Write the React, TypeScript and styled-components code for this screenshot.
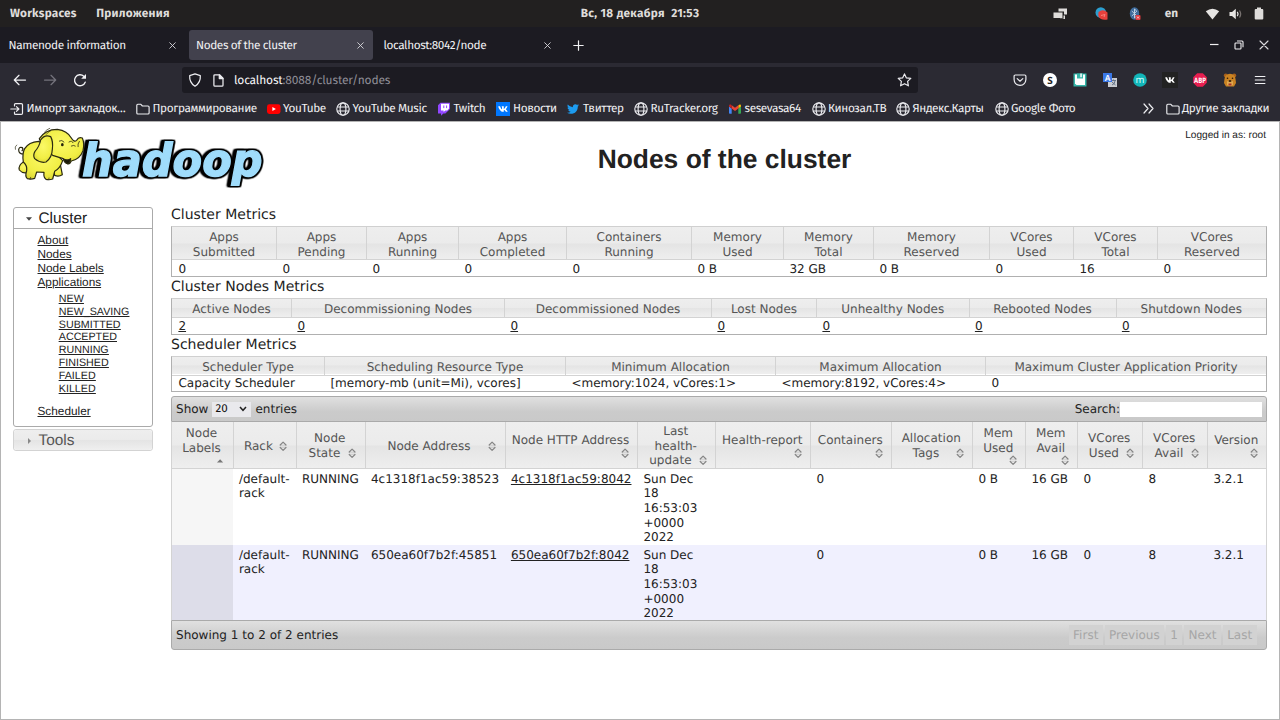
import React from 'react';
import styled, { createGlobalStyle, css } from 'styled-components';
import { FaTwitter, FaVk } from 'react-icons/fa';

const GlobalStyle = createGlobalStyle`
  * { box-sizing: border-box; }
  html, body { margin: 0; padding: 0; }
  body {
    width: 1280px;
    height: 720px;
    overflow: hidden;
    background: #fff;
    text-rendering: geometricPrecision;
  }
`;

const uiFont = `"Fira Sans", "Noto Sans", "Open Sans", sans-serif`;
const sansFont = `"Liberation Sans", Arial, sans-serif`;
const dataFont = `"DejaVu Sans", Verdana, sans-serif`;

const Window = styled.div`
  display: flex;
  flex-direction: column;
  width: 1280px;
  height: 720px;
  font-family: ${uiFont};
  font-size: 11.8px;
  color: #f0f0f2;
`;

const Label = styled.span<{ $ls?: number }>`
  white-space: nowrap;
  letter-spacing: ${(p) => p.$ls ?? -0.38}px;
`;

/* ---------- desktop panel ---------- */

const Panel = styled.div`
  display: grid;
  grid-template-columns: 1fr auto 1fr;
  align-items: center;
  height: 27px;
  padding: 0 10px 0 10px;
  background: #222020;
  color: #dedcda;
  font-weight: 700;
`;

const PanelLeft = styled.div`
  display: flex;
  gap: 19.5px;
`;

const PanelRight = styled.div`
  display: flex;
  justify-content: flex-end;
  align-items: center;

  svg { display: block; }
`;

const Spacer = styled.span<{ $w: number }>`
  flex: none;
  width: ${(p) => p.$w}px;
`;

/* ---------- tabs ---------- */

const TabStrip = styled.div`
  display: flex;
  align-items: center;
  height: 36px;
  padding: 0 11px 0 1.5px;
  background: #1c1b22;
`;

const Tab = styled.div<{ $active?: boolean }>`
  display: flex;
  align-items: center;
  justify-content: space-between;
  width: 184px;
  height: 30px;
  margin-right: 3.5px;
  padding: 1px 9.5px 0 7px;
  border-radius: 3px;
  background: ${(p) => (p.$active ? '#42414d' : 'transparent')};

  svg { display: block; }
`;

const WindowButtons = styled.div`
  display: flex;
  align-items: center;
  gap: 15px;
  margin-left: auto;
`;

/* ---------- navigation ---------- */

const NavBar = styled.div`
  display: flex;
  align-items: center;
  height: 33px;
  padding: 1px 12px 0 13px;
  background: #2b2a33;

  > svg { display: block; flex: none; }
`;

const UrlBar = styled.div`
  display: flex;
  align-items: center;
  width: 736px;
  height: 26px;
  margin: 0 0 0 95px;
  padding: 0 6px;
  border-radius: 3px;
  background: #1c1b22;
  color: #8e8d96;

  b { font-weight: 400; color: #f4f4f6; }
  svg { display: block; }
`;

const UrlText = styled(Label)`
  flex: 1;
  margin-left: 10px;
  padding-top: 1px;
  font-size: 12px;
`;

const Extensions = styled.div`
  display: flex;
  align-items: center;
  gap: 14px;
  margin-left: auto;

  svg { display: block; width: 16px; height: 16px; }
`;

const Bookmarks = styled.div`
  display: flex;
  align-items: center;
  height: 25px;
  padding: 0 0 0 10px;
  background: #2b2a33;
`;

const Bookmark = styled.div<{ $w: number }>`
  display: flex;
  flex: none;
  align-items: center;
  width: ${(p) => p.$w}px;

  > svg { display: block; flex: none; width: 14px; height: 14px; margin-right: 2.5px; }
`;

/* ---------- page ---------- */

const Page = styled.div`
  display: flex;
  flex-direction: column;
  height: 599px;
  border: 1px solid #b4b4b4;
  background: #fff;
  color: #222;
  font-family: ${dataFont};
`;

const Banner = styled.header`
  display: grid;
  grid-template-columns: 260px 1fr 160px;
  height: 83px;
`;

const LogoBox = styled.div`
  padding: 4px 0 0 12px;
  svg { display: block; overflow: visible; }
`;

const Title = styled.h1`
  margin: 22px 0 0;
  padding-left: 69px;
  font: 700 26.4px/31px ${sansFont};
  text-align: center;
`;

const LoggedIn = styled.div`
  padding: 8px 13px 0 0;
  font: 10.1px/12px ${sansFont};
  text-align: right;
`;

const Columns = styled.div`
  display: grid;
  grid-template-columns: 140px 1096px;
  column-gap: 18px;
  align-items: start;
  padding-left: 12px;
`;

const Sidebar = styled.nav`
  display: flex;
  flex-direction: column;
  gap: 2px;
  padding-top: 2px;
  font-family: ${sansFont};
`;

const Section = styled.div`
  border: 1px solid #aaa;
  border-radius: 3px;
`;

const glass = css`
  background: linear-gradient(#eeeeee, #ebebeb 49%, #e4e4e4 51%, #efefef);
`;

const SectionHead = styled.div<{ $closed?: boolean }>`
  display: flex;
  align-items: center;
  height: ${(p) => (p.$closed ? 20 : 21)}px;
  padding: 1px 0 0 11.5px;
  font-size: 15.4px;
  border-bottom: ${(p) => (p.$closed ? '0' : '1px solid #aaa')};
  border-radius: ${(p) => (p.$closed ? '3px' : '0')};
  color: ${(p) => (p.$closed ? '#555' : '#212121')};
  ${(p) => p.$closed && glass}

  svg { display: block; margin-right: 7px; }
`;

const ToolsSection = styled(Section)`
  border-color: #d3d3d3;
`;

const Links = styled.ul<{ $nested?: boolean }>`
  margin: 0;
  list-style: none;
  text-decoration: underline;
  padding: ${(p) => (p.$nested ? '3.5px 0 8px 21.3px' : '4px 0 8.4px 23.5px')};
  font-size: ${(p) => (p.$nested ? 10.7 : 11.8)}px;
  line-height: ${(p) => (p.$nested ? 12.85 : 14.1)}px;
`;

const Content = styled.main`
  display: flex;
  flex-direction: column;
  font-size: 12.02px;
  line-height: 14.67px;
`;

const Heading = styled.h3`
  height: 21px;
  margin: 0;
  padding-top: 1.6px;
  font-size: 14.02px;
  font-weight: 400;
  line-height: 17px;
`;

const Metrics = styled.div`
  border: 1px solid #b0b0b0;
  border-top-color: #d0d0d0;
`;

const GridRow = styled.div<{ $cols: string; $h: number }>`
  display: grid;
  grid-template-columns: ${(p) => p.$cols};
  height: ${(p) => p.$h}px;
`;

const HeadRow = styled(GridRow)`
  ${glass}
  color: #555;
`;

const HeadCell = styled.div`
  display: flex;
  flex-direction: column;
  align-items: center;
  justify-content: center;
  padding-top: 3px;
  border-bottom: 1px solid #d3d3d3;
  white-space: nowrap;

  & + & { border-left: 1px solid #d3d3d3; }
`;

const Cell = styled.div`
  align-self: center;
  padding: 2.4px 0 0 6.4px;
  white-space: nowrap;
`;

/* ---------- nodes table ---------- */

const DataTable = styled.section`
  display: flex;
  flex-direction: column;
  margin-top: 4px;
`;

const Toolbar = styled.div<{ $bottom?: boolean }>`
  display: flex;
  align-items: center;
  height: ${(p) => (p.$bottom ? 30 : 26)}px;
  padding: 0 4px 0 4px;
  border: 1px solid #aaa;
  border-radius: ${(p) => (p.$bottom ? '0 0 3px 3px' : '3px 3px 0 0')};
  background: linear-gradient(#e0e0e0, #cbcbcb 60%, #c9c9c9);
`;

const PageSize = styled.span`
  display: flex;
  align-items: center;
  justify-content: space-between;
  width: 39px;
  height: 15px;
  margin: 0 4px 0 4px;
  padding: 0 4px 0 3px;
  background: #e9e9ed;
  color: #111;
  font: 400 11.6px/15px ${uiFont};
`;

const SearchLabel = styled.span`
  margin-left: auto;
`;

const SearchInput = styled.input`
  width: 142px;
  height: 15px;
  padding: 0;
  border: 0;
  background: #fff;
`;

const Body = styled.div`
  border: 1px solid #d3d3d3;
  border-width: 0 1px;
`;

const SortCell = styled(HeadCell)`
  align-items: stretch;
  padding: 2px 6.5px 0 5px;
  text-align: center;
  svg { display: block; flex: none; }
`;

const SortLine = styled.div`
  display: flex;
  align-items: center;

  span { flex: 1; }
`;

const IconLine = styled.div`
  display: flex;
  justify-content: flex-end;
  height: 10.7px;
`;

const NodeRow = styled(GridRow)<{ $even?: boolean }>`
  background: ${(p) => (p.$even ? '#f0f0fe' : '#fff')};

  > :first-child { background: ${(p) => (p.$even ? '#dddde9' : '#f6f6f6')}; }
`;

const NodeCell = styled.div<{ $underline?: boolean }>`
  padding: 2.6px 0 0 6.4px;
  white-space: pre-line;
  text-decoration: ${(p) => (p.$underline ? 'underline' : 'none')};
`;

const Pager = styled.div`
  display: flex;
  gap: 2px;
  margin-left: auto;
  margin-right: 5.5px;
  color: #a6a6a6;
`;

const PageButton = styled.span`
  height: 20px;
  padding: 0 4.3px;
  background: #d2d2d2;
  line-height: 20px;
`;

/* ---------- icons ---------- */

const Cross = ({ size = 7, w = 1 }: { size?: number; w?: number }) => (
  <svg width={size} height={size} viewBox="0 0 8 8" stroke="#dcdce0" strokeWidth={w} strokeLinecap="round">
    <path d="M.8.8l6.4 6.4M7.2.8L.8 7.2" />
  </svg>
);

const Globe = () => (
  <svg viewBox="0 0 14 14" fill="none" stroke="#ececf0" strokeWidth="1.15">
    <circle cx="7" cy="7" r="6.2" />
    <ellipse cx="7" cy="7" rx="2.9" ry="6.2" />
    <path d="M1.2 5h11.6M1.2 9h11.6" />
  </svg>
);

const Folder = () => (
  <svg viewBox="0 0 14 14" fill="none" stroke="#ececf0" strokeWidth="1.15" strokeLinejoin="round">
    <path d="M.8 11V3.2Q.8 2.2 1.8 2.2H4.6L6.4 4H12Q13.1 4 13.1 5V11Q13.1 12 12 12H1.8Q.8 12 .8 11Z" />
  </svg>
);

const ImportIcon = () => (
  <svg viewBox="0 0 14 14" fill="none" stroke="#ececf0" strokeWidth="1.2" strokeLinecap="round" strokeLinejoin="round">
    <path d="M4.5 4V2.6Q4.5 1.6 5.5 1.6H11.3Q12.5 1.6 12.5 2.8V11.2Q12.5 12.4 11.3 12.4H5.5Q4.5 12.4 4.5 11.4V10" />
    <path d="M.8 7H8.6M6.4 4.6L8.9 7L6.4 9.4" />
  </svg>
);

const YouTube = () => (
  <svg viewBox="0 0 14 14">
    <rect x="0" y="2.3" width="13.5" height="9.6" rx="2.4" fill="#f00" />
    <path d="M5.4 5.1v4l3.5-2z" fill="#fff" />
  </svg>
);

const Twitch = () => (
  <svg viewBox="0 0 14 14">
    <path d="M3.4.8L1 3.2v8.3h3v2.3l2.4-2.3h2L13 7V.8z" fill="#9146ff" />
    <path d="M4 1.8h8v4.8L10.2 8.4H8.3L6.6 10V8.4H4z" fill="#fff" />
    <path d="M6.8 3.5v2.6M9.6 3.5v2.6" stroke="#9146ff" strokeWidth="1" />
  </svg>
);

const VkBox = styled.span<{ $bg: string; $size: number }>`
  display: flex;
  flex: none;
  align-items: center;
  justify-content: center;
  width: ${(p) => p.$size}px;
  height: ${(p) => p.$size}px;
  margin-right: ${(p) => (p.$size < 16 ? 3 : 0)}px;
  background: ${(p) => p.$bg};

  && svg { width: 10px; height: 10px; }
`;

const BirdBox = styled.span`
  display: flex;
  width: 14px;
  margin-right: 2.5px;
  svg { display: block; width: 12px; height: 12px; }
`;

const Gmail = () => (
  <svg viewBox="0 0 14 14">
    <path d="M1 4.4l2.7 2v5.4H1.8Q1 11.8 1 11z" fill="#4285f4" />
    <path d="M10.3 6.4L13 4.4V11Q13 11.8 12.2 11.8H10.3z" fill="#34a853" />
    <path d="M10.3 3.4L11.2 2.7Q13 2 13 3.9V4.6L10.3 6.6z" fill="#fbbc04" />
    <path d="M3.7 6.6V3.2L7 5.7L10.3 3.2V6.6L7 9.1z" fill="#ea4335" />
    <path d="M1 4.6V3.9Q1.1 2 2.8 2.6L3.7 3.3V6.6z" fill="#c5221f" />
  </svg>
);

const SortIcon = ({ asc }: { asc?: boolean }) =>
  asc ? (
    <svg width="10.7" height="10.7" viewBox="0 0 10.7 10.7">
      <path d="M2 7.6L5.1 4.2L8.2 7.6z" fill="#777" />
    </svg>
  ) : (
    <svg width="10.7" height="10.7" viewBox="0 0 10.7 10.7" fill="none" strokeLinejoin="round" strokeLinecap="round">
      <path d="M2.6 4.2H7.6M2.6 6.3H7.6" stroke="#c4c4c4" strokeWidth=".8" />
      <path d="M2.200 4L5.100 1.100L8 4M2.200 6.500L5.100 9.400L8 6.500" stroke="#858585" strokeWidth="1.200" />
    </svg>
  );

const LogoWord = styled.text`
  font: italic 700 136px ${dataFont};
  fill: #9fdcfb;
  stroke: #9fdcfb;
  stroke-width: 4px;
  stroke-linejoin: miter;
  filter: drop-shadow(4px 0 0 #000) drop-shadow(-4px 0 0 #000) drop-shadow(0 4px 0 #000)
    drop-shadow(0 -4px 0 #000) drop-shadow(-7px 0 0 #000);
`;

const Logo = () => (
  <svg width="252" height="64" viewBox="39 24 756 192">
    <defs>
      <radialGradient id="skin" cx=".5" cy=".4" r=".75">
        <stop offset="0" stopColor="#fbf967" />
        <stop offset=".6" stopColor="#f1ee45" />
        <stop offset="1" stopColor="#cfcb2a" />
      </radialGradient>
    </defs>
    <LogoWord x="246" y="173" textLength="542" lengthAdjust="spacingAndGlyphs">hadoop</LogoWord>
    <g fill="url(#skin)" stroke="#2b2a12" strokeWidth="3.6" strokeLinejoin="round" strokeLinecap="round">
      <path d="M71 108Q56 108 56 95Q58 85 67 89Q71 94 66 98" fill="none" />
      <path d="M70 132Q54 142 58 156Q66 166 80 164L86 140Z" />
      <path d="M160 154L164 172Q176 177 187 170L181 140L164 136Z" />
      <path d="M116 70Q86 72 74 92Q66 106 70 132Q82 142 80 158Q74 174 82 182Q94 185 104 181L110 162L132 163Q130 178 138 184Q148 187 158 183L164 160Q180 152 188 128L160 100Z" />
      <path d="M118 62Q136 34 172 34Q202 38 214 60Q222 74 230 67Q236 55 247 60Q254 76 249 98Q240 124 214 129Q210 139 202 137Q192 134 190 122Q176 118 158 112L130 92Z" />
      <path d="M152 56Q134 48 122 66Q118 86 105 100Q98 112 104 122Q120 136 138 132Q156 120 157 94Q160 70 152 56Z" />
      <path d="M191 123Q206 129 212 122Q210 138 202 137Q193 133 191 123Z" fill="#17160a" />
      <path d="M178 69Q186 64 192 72M207 72Q216 66 219 74M214 84Q222 80 226 84M238 70Q232 78 234 86" fill="none" strokeWidth="2.4" />
      <path d="M46 94Q43 86 50 81M133 43Q140 34 149 31M139 49Q144 42 152 38M90 184L92 178M146 185L147 180" fill="none" strokeWidth="2" />
      <ellipse cx="187" cy="80" rx="4" ry="5" fill="#25240c" stroke="none" />
    </g>
  </svg>
);

/* ---------- data ---------- */

type MetricsTable = {
  title: string;
  cols: string;
  headH: number;
  rowH: number;
  heads: string[];
  values: string[];
  links?: boolean;
};

const metrics: MetricsTable[] = [
  {
    title: 'Cluster Metrics',
    cols: '104px 90px 92px 108px 125px 92px 90px 116px 84px 84px 109px',
    headH: 33,
    rowH: 16,
    heads: ['Apps Submitted', 'Apps Pending', 'Apps Running', 'Apps Completed', 'Containers Running', 'Memory Used', 'Memory Total', 'Memory Reserved', 'VCores Used', 'VCores Total', 'VCores Reserved'],
    values: ['0', '0', '0', '0', '0', '0 B', '32 GB', '0 B', '0', '16', '0'],
  },
  {
    title: 'Cluster Nodes Metrics',
    cols: '119px 213px 207px 105px 152.5px 147px 150.5px',
    headH: 18,
    rowH: 17,
    heads: ['Active Nodes', 'Decommissioning Nodes', 'Decommissioned Nodes', 'Lost Nodes', 'Unhealthy Nodes', 'Rebooted Nodes', 'Shutdown Nodes'],
    values: ['2', '0', '0', '0', '0', '0', '0'],
    links: true,
  },
  {
    title: 'Scheduler Metrics',
    cols: '152px 241px 210px 210px 281px',
    headH: 17,
    rowH: 17,
    heads: ['Scheduler Type', 'Scheduling Resource Type', 'Minimum Allocation', 'Maximum Allocation', 'Maximum Cluster Application Priority'],
    values: ['Capacity Scheduler', '[memory-mb (unit=Mi), vcores]', '<memory:1024, vCores:1>', '<memory:8192, vCores:4>', '0'],
  },
];

const nodeCols = '60.5px 63px 69px 140px 132.5px 78px 95px 81px 81px 53px 52px 65px 65px 59px';

const nodeHeads: { lines: string[]; below?: boolean }[] = [
  { lines: ['Node', 'Labels'], below: true },
  { lines: ['Rack'] },
  { lines: ['Node', 'State'] },
  { lines: ['Node Address'] },
  { lines: ['Node HTTP Address'], below: true },
  { lines: ['Last', 'health-', 'update'] },
  { lines: ['Health-report'], below: true },
  { lines: ['Containers'], below: true },
  { lines: ['Allocation', 'Tags'] },
  { lines: ['Mem', 'Used'], below: true },
  { lines: ['Mem', 'Avail'], below: true },
  { lines: ['VCores', 'Used'] },
  { lines: ['VCores', 'Avail'] },
  { lines: ['Version'], below: true },
];

const updated = 'Sun Dec\n18\n16:53:03\n+0000\n2022';
const nodes = [
  ['', '/default-\nrack', 'RUNNING', '4c1318f1ac59:38523', '4c1318f1ac59:8042', updated, '', '0', '', '0 B', '16 GB', '0', '8', '3.2.1'],
  ['', '/default-\nrack', 'RUNNING', '650ea60f7b2f:45851', '650ea60f7b2f:8042', updated, '', '0', '', '0 B', '16 GB', '0', '8', '3.2.1'],
];

const appStates = ['NEW', 'NEW_SAVING', 'SUBMITTED', 'ACCEPTED', 'RUNNING', 'FINISHED', 'FAILED', 'KILLED'];

const bookmarks: { icon: React.ReactNode; text: string; w: number }[] = [
  { icon: <ImportIcon />, text: 'Импорт закладок…', w: 126 },
  { icon: <Folder />, text: 'Программирование', w: 130.5 },
  { icon: <YouTube />, text: 'YouTube', w: 69.5 },
  { icon: <Globe />, text: 'YouTube Music', w: 101 },
  { icon: <Twitch />, text: 'Twitch', w: 59 },
  { icon: <VkBox $bg="#07f" $size={14}><FaVk color="#fff" /></VkBox>, text: 'Новости', w: 70.5 },
  { icon: <BirdBox><FaTwitter color="#1d9bf0" /></BirdBox>, text: 'Твиттер', w: 67.5 },
  { icon: <Globe />, text: 'RuTracker.org', w: 94 },
  { icon: <Gmail />, text: 'sesevasa64', w: 83.5 },
  { icon: <Globe />, text: 'Кинозал.ТВ', w: 84.5 },
  { icon: <Globe />, text: 'Яндекс.Карты', w: 98.5 },
  { icon: <Globe />, text: 'Google Фото', w: 148 },
];

/* ---------- sections ---------- */

const DesktopPanel = () => (
  <Panel>
    <PanelLeft>
      <Label $ls={0.2}>Workspaces</Label>
      <Label $ls={0.25}>Приложения</Label>
    </PanelLeft>
    <Label $ls={0.32}>Вс, 18 декабря&nbsp; 21:53</Label>
    <PanelRight>
      <svg width="15" height="12" viewBox="0 0 15 12" fill="#dedcda">
        <path d="M5.5.5H14v6H11V3.5H5.5z" />
        <path d="M.5 4.5H9.5v5.5H.5z" />
        <path d="M10.5 7.5H12v3.5H7V10.8H10.5z" />
      </svg>
      <Spacer $w={27} />
      <svg width="14" height="14" viewBox="0 0 14 14">
        <circle cx="5.8" cy="5.6" r="5.3" fill="#2b9fd0" />
        <path d="M3.5 5Q8 1.5 12.5 5.5V12.5Q6 14 3.3 9z" fill="#e8403c" />
        <path d="M6 8.5L10 7.5L9 10" fill="none" stroke="#f8847c" strokeWidth="1" />
      </svg>
      <Spacer $w={19} />
      <svg width="14" height="14" viewBox="0 0 14 14">
        <ellipse cx="6.5" cy="6.5" rx="4.7" ry="6.2" fill="#3f6c9c" />
        <path d="M3.8 4L8.8 8.8L6.5 11V2L8.8 4.2L3.8 9" fill="none" stroke="#c9d8e8" strokeWidth=".9" />
        <rect x="7.5" y="8" width="5" height="5" rx="1" fill="#e0383c" />
        <path d="M9 9.5l2 2M11 9.5l-2 2" stroke="#fff" strokeWidth=".7" />
      </svg>
      <Spacer $w={23} />
      <Label $ls={0}>en</Label>
      <Spacer $w={27} />
      <svg width="15" height="12" viewBox="0 0 15 12" fill="#e6e4e2">
        <path d="M.8 3.2Q7.5-1.8 14.2 3.2L7.5 11.5z" />
      </svg>
      <Spacer $w={9} />
      <svg width="14" height="12" viewBox="0 0 14 12">
        <path d="M.5 4H3L6.8.8V11.2L3 8H.5z" fill="#e6e4e2" />
        <path d="M8.3 3.8Q9.8 6 8.3 8.2" fill="none" stroke="#e6e4e2" strokeWidth="1.3" />
        <path d="M10.5 2.5Q12.8 6 10.5 9.5" fill="none" stroke="#77716f" strokeWidth="1.3" />
      </svg>
      <Spacer $w={11} />
      <svg width="10" height="13" viewBox="0 0 10 13" fill="#dedcda">
        <path d="M3 .5H7V2H8.2Q9.3 2 9.3 3V11.5Q9.3 12.5 8.2 12.5H1.8Q.7 12.5.7 11.5V3Q.7 2 1.8 2H3z" />
      </svg>
      <Spacer $w={6} />
    </PanelRight>
  </Panel>
);

const BrowserTabs = () => (
  <TabStrip>
    <Tab><Label>Namenode information</Label><Cross /></Tab>
    <Tab $active><Label>Nodes of the cluster</Label><Cross /></Tab>
    <Tab><Label>localhost:8042/node</Label><Cross /></Tab>
    <Spacer $w={9} />
    <svg width="11" height="11" viewBox="0 0 11 11" stroke="#f0f0f2" strokeWidth="1.2" strokeLinecap="round">
      <path d="M5.5.8V10.2M.8 5.5H10.2" />
    </svg>
    <WindowButtons>
      <svg width="10" height="10" viewBox="0 0 10 10" stroke="#f0f0f2" strokeWidth="1.2"><path d="M1 4.5H9.5" /></svg>
      <svg width="10" height="10" viewBox="0 0 10 10" fill="none" stroke="#f0f0f2" strokeWidth="1.1">
        <rect x="1" y="3" width="6" height="6" rx=".8" />
        <path d="M3 1H8Q9 1 9 2V7.2" />
      </svg>
      <Cross size={10} w={0.9} />
    </WindowButtons>
  </TabStrip>
);

const BrowserNav = () => (
  <NavBar>
    <svg width="14" height="12" viewBox="0 0 14 12" fill="none" stroke="#f2f2f5" strokeWidth="1.25" strokeLinecap="round" strokeLinejoin="round">
      <path d="M12.5 6H1.5M6 1.3L1.3 6L6 10.7" />
    </svg>
    <Spacer $w={16} />
    <svg width="14" height="12" viewBox="0 0 14 12" fill="none" stroke="#74737c" strokeWidth="1.25" strokeLinecap="round" strokeLinejoin="round">
      <path d="M1.5 6H12.5M8 1.3L12.7 6L8 10.7" />
    </svg>
    <Spacer $w={16} />
    <svg width="14" height="14" viewBox="0 0 14 14" fill="none" stroke="#f2f2f5" strokeWidth="1.35" strokeLinecap="round">
      <path d="M12.2 9.2A5.5 5.5 0 1 1 10.8 3.2" />
      <path d="M13 1V5.8H8.2z" fill="#f2f2f5" stroke="none" />
    </svg>
    <UrlBar>
      <svg width="14" height="14" viewBox="0 0 14 14" fill="none" stroke="#ececf0" strokeWidth="1.25" strokeLinejoin="round">
        <path d="M7 .9L12.3 2.7Q12.8 9.5 7 13.2Q1.2 9.5 1.7 2.7z" />
      </svg>
      <Spacer $w={11} />
      <svg width="11" height="13" viewBox="0 0 11 13" fill="none" stroke="#ececf0" strokeWidth="1.25" strokeLinejoin="round">
        <path d="M.9 1.8Q.9.8 1.9.8H6.5L10 4.3V11.2Q10 12.2 9 12.2H1.9Q.9 12.2.9 11.2z" />
        <path d="M6.3 1V4.6H10z" fill="#ececf0" />
      </svg>
      <UrlText $ls={-0.16}><b>localhost</b>:8088/cluster/nodes</UrlText>
      <svg width="15" height="14" viewBox="0 0 15 14" fill="none" stroke="#ececf0" strokeWidth="1.2" strokeLinejoin="round">
        <path d="M7.5.9L9.4 4.9L13.8 5.4L10.6 8.4L11.4 12.8L7.5 10.7L3.6 12.8L4.4 8.4L1.2 5.4L5.6 4.9z" />
      </svg>
    </UrlBar>
    <Extensions>
      <svg viewBox="0 0 16 16" fill="none" stroke="#ececf0" strokeWidth="1.2" strokeLinecap="round" strokeLinejoin="round">
        <path d="M3.3 3H12.7Q13.9 3 13.9 4.2V7.5Q13.5 13 8 13.4Q2.5 13 2.1 7.5V4.2Q2.1 3 3.3 3z" />
        <path d="M5.2 6.6L8 9.2L10.8 6.6" />
      </svg>
      <svg viewBox="0 0 16 16">
        <circle cx="8" cy="8" r="7" fill="#fff" />
        <text x="8" y="11.6" textAnchor="middle" fontFamily="Noto Sans, sans-serif" fontWeight="700" fontSize="10" fill="#222">S</text>
      </svg>
      <svg viewBox="0 0 16 16">
        <path d="M1.5 1.5H14.5V14.5H1.5z" fill="#35b5a8" />
        <path d="M3 2.5H13V13H4.5L3 11.5z" fill="#fff" />
        <path d="M5 1.5H11V6.5H5z" fill="#35b5a8" />
        <path d="M8.3 1.5H9.8V5.2H8.3z" fill="#fff" />
      </svg>
      <svg viewBox="0 0 16 16">
        <rect x="6" y="6" width="9" height="9" fill="#c9ccd2" />
        <path d="M9 8.5H14M11.5 7.5V8.5M10 13Q13 12 13 8.8M10 10L13.5 13" stroke="#5a6a80" strokeWidth=".9" fill="none" />
        <rect x="1" y="1" width="9" height="9" fill="#3b78e7" />
        <text x="5.5" y="8.6" textAnchor="middle" fontFamily="Noto Sans, sans-serif" fontWeight="600" fontSize="8.5" fill="#fff">A</text>
      </svg>
      <svg viewBox="0 0 16 16">
        <circle cx="8" cy="8" r="6.8" fill="#12b5b8" />
        <text x="8" y="11" textAnchor="middle" fontFamily="Noto Sans, sans-serif" fontSize="9.5" fill="#d8ffff">m</text>
      </svg>
      <VkBox $bg="#222" $size={16}><FaVk color="#fff" /></VkBox>
      <svg viewBox="0 0 16 16">
        <path d="M5.2 1.2H10.8L14.8 5.2V10.8L10.8 14.8H5.2L1.2 10.8V5.2z" fill="#e81e50" />
        <text x="8" y="10.7" textAnchor="middle" textLength="12" lengthAdjust="spacingAndGlyphs" fontFamily="Noto Sans, sans-serif" fontWeight="700" fontSize="7.5" fill="#fff">ABP</text>
      </svg>
      <svg viewBox="0 0 16 16">
        <circle cx="3.8" cy="3.6" r="2" fill="#a8601c" />
        <circle cx="12.2" cy="3.6" r="2" fill="#a8601c" />
        <path d="M8 1.8Q13 2 13.5 7L14 11L12 14.5H4L2 11L2.5 7Q3 2 8 1.8z" fill="#c98222" />
        <path d="M5 9.5Q8 6.5 11 9.5L11 13Q8 15 5 13z" fill="#e0a850" />
        <ellipse cx="8" cy="9" rx="1.5" ry="1" fill="#3a2008" />
        <circle cx="5.5" cy="6.3" r=".8" fill="#2a1608" />
        <circle cx="10.5" cy="6.3" r=".8" fill="#2a1608" />
        <path d="M6.5 11.5H9.5V13.5H6.5z" fill="#a8342a" />
      </svg>
      <svg viewBox="0 0 16 16" stroke="#f2f2f5" strokeWidth="1.15" strokeLinecap="round">
        <path d="M3.3 4.5H12.9M3.3 8H12.9M3.3 11.5H12.9" />
      </svg>
    </Extensions>
  </NavBar>
);

const BookmarkBar = () => (
  <Bookmarks>
    {bookmarks.map((b) => (
      <Bookmark key={b.text} $w={b.w}>
        {b.icon}
        <Label>{b.text}</Label>
      </Bookmark>
    ))}
    <svg width="11" height="11" viewBox="0 0 11 11" fill="none" stroke="#ececf0" strokeWidth="1.2" strokeLinecap="round" strokeLinejoin="round">
      <path d="M1 1L5 5.5L1 10M6 1L10 5.5L6 10" />
    </svg>
    <Spacer $w={12} />
    <Bookmark $w={108}><Folder /><Label>Другие закладки</Label></Bookmark>
  </Bookmarks>
);

const ClusterMenu = () => (
  <Sidebar>
    <Section>
      <SectionHead>
        <svg width="6" height="4" viewBox="0 0 6 4"><path d="M0 .3H6L3 3.7z" fill="#454545" /></svg>
        Cluster
      </SectionHead>
      <Links>
        <li>About</li>
        <li>Nodes</li>
        <li>Node Labels</li>
        <li>Applications</li>
        <li>
          <Links as="ul" $nested>
            {appStates.map((s) => <li key={s}>{s}</li>)}
          </Links>
        </li>
        <li>Scheduler</li>
      </Links>
    </Section>
    <ToolsSection>
      <SectionHead $closed>
        <svg width="6" height="6" viewBox="0 0 6 6"><path d="M2 0V6L5 3z" fill="#888" /></svg>
        Tools
      </SectionHead>
    </ToolsSection>
  </Sidebar>
);

const MetricsBlock = ({ table }: { table: MetricsTable }) => (
  <>
    <Heading>{table.title}</Heading>
    <Metrics>
      <HeadRow $cols={table.cols} $h={table.headH}>
        {table.heads.map((h) => (
          <HeadCell key={h}>
            {table.headH > 20 ? h.split(' ').map((l) => <span key={l}>{l}</span>) : h}
          </HeadCell>
        ))}
      </HeadRow>
      <GridRow $cols={table.cols} $h={table.rowH}>
        {table.values.map((v, i) => (
          <Cell key={i}>{table.links ? <u>{v}</u> : v}</Cell>
        ))}
      </GridRow>
    </Metrics>
  </>
);

const NodesTable = () => (
  <DataTable>
    <Toolbar>
      Show
      <PageSize>
        20
        <svg width="8" height="6" viewBox="0 0 8 6" fill="none" stroke="#222" strokeWidth="1.5"><path d="M1 1L4 4.3L7 1" /></svg>
      </PageSize>
      entries
      <SearchLabel>Search:</SearchLabel>
      <SearchInput aria-label="Search" />
    </Toolbar>
    <Body>
      <HeadRow $cols={nodeCols} $h={47}>
        {nodeHeads.map(({ lines, below }, i) => (
          <SortCell key={i}>
            {lines.map((line, n) => (
              <SortLine key={line}>
                <span>{line}</span>
                {!below && n === lines.length - 1 && <SortIcon />}
              </SortLine>
            ))}
            {below && <IconLine><SortIcon asc={i === 0} /></IconLine>}
          </SortCell>
        ))}
      </HeadRow>
      {nodes.map((cells, r) => (
        <NodeRow key={r} $cols={nodeCols} $h={r ? 75 : 76} $even={r === 1}>
          {cells.map((c, i) => <NodeCell key={i} $underline={i === 4}>{c}</NodeCell>)}
        </NodeRow>
      ))}
    </Body>
    <Toolbar $bottom>
      Showing 1 to 2 of 2 entries
      <Pager>
        {['First', 'Previous', '1', 'Next', 'Last'].map((p) => <PageButton key={p}>{p}</PageButton>)}
      </Pager>
    </Toolbar>
  </DataTable>
);

export default function App() {
  return (
    <Window>
      <GlobalStyle />
      <DesktopPanel />
      <BrowserTabs />
      <BrowserNav />
      <BookmarkBar />
      <Page>
        <Banner>
          <LogoBox><Logo /></LogoBox>
          <Title>Nodes of the cluster</Title>
          <LoggedIn>Logged in as: root</LoggedIn>
        </Banner>
        <Columns>
          <ClusterMenu />
          <Content>
            {metrics.map((t) => <MetricsBlock key={t.title} table={t} />)}
            <NodesTable />
          </Content>
        </Columns>
      </Page>
    </Window>
  );
}
